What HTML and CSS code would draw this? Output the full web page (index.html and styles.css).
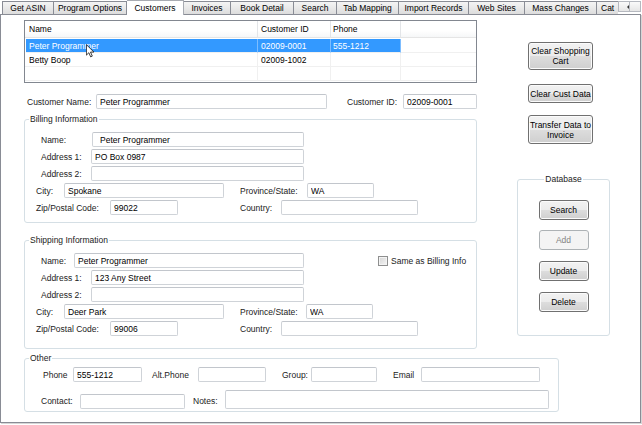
FILE: index.html
```html
<!DOCTYPE html>
<html>
<head>
<meta charset="utf-8">
<title>Customers</title>
<link rel="stylesheet" href="styles.css">
</head>
<body>
<div class="tabstrip">
  <div class="tabs">
    <div class="tab first t-asin">Get ASIN</div>
    <div class="tab t-prog">Program Options</div>
    <div class="tab active t-cust">Customers</div>
    <div class="tab t-inv">Invoices</div>
    <div class="tab t-book">Book Detail</div>
    <div class="tab t-search">Search</div>
    <div class="tab t-map">Tab Mapping</div>
    <div class="tab t-imp">Import Records</div>
    <div class="tab t-web">Web Sites</div>
    <div class="tab t-mass">Mass Changes</div>
    <div class="tab t-cat">Cat</div>
  </div>
  <div class="scroller">
    <div class="arrow"><span class="tri left"></span></div>
    <div class="arrow"><span class="tri right"></span></div>
  </div>
</div>

<div class="panel">
  <div class="top">
    <div class="left">
      <div class="list">
        <div class="lv-head">
          <div class="cell c-name">Name</div>
          <div class="cell c-id">Customer ID</div>
          <div class="cell c-phone">Phone</div>
          <div class="cell c-fill"></div>
        </div>
        <div class="lv-body">
          <div class="lv-row selected">
            <div class="cell c-name">Peter Programmer</div>
            <div class="cell c-id">02009-0001</div>
            <div class="cell c-phone">555-1212</div>
            <div class="cell c-fill"></div>
          </div>
          <div class="lv-row">
            <div class="cell c-name">Betty Boop</div>
            <div class="cell c-id">02009-1002</div>
            <div class="cell c-phone"></div>
            <div class="cell c-fill"></div>
          </div>
          <div class="lv-row">
            <div class="cell c-name"></div>
            <div class="cell c-id"></div>
            <div class="cell c-phone"></div>
            <div class="cell c-fill"></div>
          </div>
        </div>
        <svg class="cursor" viewBox="0 0 12 18" width="9" height="14">
          <path d="M0.5 0.5 L0.5 14.5 L3.8 11.3 L6.2 16.8 L8.4 15.8 L6 10.4 L10.5 10.4 Z" fill="#fff" stroke="#000" stroke-width="1" stroke-linejoin="round"/>
        </svg>
      </div>

      <div class="field-row cust-row">
        <label class="lbl ml3 w69">Customer Name:</label>
        <input class="tb w231" value="Peter Programmer" readonly>
        <label class="lbl ml20 w56">Customer ID:</label>
        <input class="tb w74" value="02009-0001" readonly>
      </div>

      <fieldset class="group billing">
        <legend>Billing Information</legend>
        <div class="field-row">
          <label class="lbl ml16 w51">Name:</label>
          <input class="tb w212 indent" value="Peter Programmer" readonly>
        </div>
        <div class="field-row">
          <label class="lbl ml16 w50">Address 1:</label>
          <input class="tb w213" value="PO Box 0987" readonly>
        </div>
        <div class="field-row">
          <label class="lbl ml16 w50">Address 2:</label>
          <input class="tb w213" value="" readonly>
        </div>
        <div class="field-row">
          <label class="lbl ml11 w28">City:</label>
          <input class="tb w160" value="Spokane" readonly>
          <label class="lbl ml16 w67">Province/State:</label>
          <input class="tb w67" value="WA" readonly>
        </div>
        <div class="field-row">
          <label class="lbl ml11 w74">Zip/Postal Code:</label>
          <input class="tb w68" value="99022" readonly>
          <label class="lbl ml62 w41">Country:</label>
          <input class="tb w137" value="" readonly>
        </div>
      </fieldset>

      <fieldset class="group shipping">
        <legend>Shipping Information</legend>
        <div class="field-row">
          <label class="lbl ml16 w33">Name:</label>
          <input class="tb w230" value="Peter Programmer" readonly>
          <span class="check ml74"></span>
          <label class="lbl ml3">Same as Billing Info</label>
        </div>
        <div class="field-row">
          <label class="lbl ml16 w50">Address 1:</label>
          <input class="tb w213" value="123 Any Street" readonly>
        </div>
        <div class="field-row">
          <label class="lbl ml16 w50">Address 2:</label>
          <input class="tb w213" value="" readonly>
        </div>
        <div class="field-row">
          <label class="lbl ml11 w28">City:</label>
          <input class="tb w160" value="Deer Park" readonly>
          <label class="lbl ml16 w66">Province/State:</label>
          <input class="tb w67" value="WA" readonly>
        </div>
        <div class="field-row">
          <label class="lbl ml11 w74">Zip/Postal Code:</label>
          <input class="tb w68" value="99006" readonly>
          <label class="lbl ml62 w41">Country:</label>
          <input class="tb w137" value="" readonly>
        </div>
      </fieldset>
    </div>

    <div class="right">
      <button class="btn btn-cart">Clear Shopping<br>Cart</button>
      <button class="btn btn-clear">Clear Cust Data</button>
      <button class="btn btn-transfer">Transfer Data to<br>Invoice</button>
      <fieldset class="group database">
        <legend>Database</legend>
        <button class="btn db-btn">Search</button>
        <button class="btn db-btn" disabled>Add</button>
        <button class="btn db-btn">Update</button>
        <button class="btn db-btn">Delete</button>
      </fieldset>
    </div>
  </div>

  <fieldset class="group other">
    <legend>Other</legend>
    <div class="field-row">
      <label class="lbl ml18 w30">Phone</label>
      <input class="tb w69" value="555-1212" readonly>
      <label class="lbl ml10 w46">Alt.Phone</label>
      <input class="tb w68" value="" readonly>
      <label class="lbl ml16 w29">Group:</label>
      <input class="tb w66" value="" readonly>
      <label class="lbl ml16 w28">Email</label>
      <input class="tb w119" value="" readonly>
    </div>
    <div class="field-row notes-row">
      <label class="lbl ml16 w39">Contact:</label>
      <input class="tb w105" value="" readonly>
      <label class="lbl ml8 w32">Notes:</label>
      <input class="tb w324 tall" value="" readonly>
    </div>
  </fieldset>
</div>
</body>
</html>
```
FILE: styles.css
```css
* { box-sizing: border-box; }
html, body { margin: 0; padding: 0; background: #fff; }
body {
  width: 642px;
  height: 425px;
  overflow: hidden;
  font-family: "Liberation Sans", Arial, sans-serif;
  font-size: 8.5px;
  color: #1b1b1b;
}

/* ---------- tab strip ---------- */
.tabstrip {
  display: flex;
  align-items: flex-start;
  height: 15px;
  position: relative;
  z-index: 1;
}
.tabs {
  flex: none;
  display: flex;
  align-items: flex-end;
  width: 618px;
  height: 15px;
  padding-left: 2px;
  overflow: hidden;
}
.tab {
  flex: none;
  height: 13px;
  margin-bottom: 1px;
  border: 1px solid #898c95;
  border-left: none;
  border-bottom: none;
  background: linear-gradient(#f4f4f4, #e9e9e9 50%, #dcdcdc);
  display: flex;
  align-items: center;
  justify-content: center;
  white-space: nowrap;
  color: #000;
  line-height: 10px;
}
.tab.first { border-left: 1px solid #898c95; }
.tab.active {
  height: 15px;
  margin-bottom: 0;
  background: #fff;
  border-color: #a8abb2;
  padding-bottom: 1px;
}
.t-asin { width: 52px; }
.t-prog { width: 73px; }
.t-cust { width: 57px; }
.t-inv { width: 47px; }
.t-book { width: 63px; }
.t-search { width: 43px; }
.t-map { width: 62px; }
.t-imp { width: 70px; }
.t-web { width: 56px; }
.t-mass { width: 72px; }
.t-cat { width: 24px; justify-content: flex-start; padding-left: 4px; border-right: none; }

.scroller { flex: none; display: flex; padding-top: 1px; }
.arrow {
  flex: none;
  width: 12px;
  height: 11px;
  border: 1px solid #b5b8bf;
  background: linear-gradient(#fafafa, #e6e6e6);
  display: flex;
  align-items: center;
  justify-content: center;
}
.arrow + .arrow { margin-left: -1px; }
.tri { width: 0; height: 0; border-top: 2px solid transparent; border-bottom: 2px solid transparent; }
.tri.left { border-right: 2px solid #333; }
.tri.right { border-left: 2px solid #333; }

/* ---------- panel ---------- */
.panel {
  margin-top: -1px;
  width: 641px;
  height: 409px;
  border: 1px solid #898c95;
  box-shadow: 1px 1px 0 #d6d6d6;
  padding-left: 23px;
  display: flex;
  flex-direction: column;
}
.top { display: flex; align-items: flex-start; }
.left { width: 453px; display: flex; flex-direction: column; }
.right {
  width: 93px;
  margin-left: 40px;
  display: flex;
  flex-direction: column;
  align-items: flex-start;
}

/* ---------- list view ---------- */
.list {
  position: relative;
  margin-top: 5px;
  height: 63px;
  border: 1px solid #828790;
  background: #fff;
  overflow: hidden;
}
.lv-head {
  display: flex;
  height: 17px;
  border-bottom: 1px solid #e5e5e5;
  background: linear-gradient(#fff, #fff 60%, #f6f7f8);
}
.lv-head .cell { border-right: 1px solid #e3e5e8; }
.lv-body { padding-top: 1px; }
.lv-row { display: flex; height: 14px; }
.lv-row .cell { border-right: 1px solid #f0f0f0; border-bottom: 1px solid #f0f0f0; }
.cell {
  flex: none;
  display: flex;
  align-items: center;
  padding-left: 3px;
  white-space: nowrap;
  color: #000;
}
.c-name { width: 233px; padding-left: 4px; }
.c-id { width: 73px; }
.c-phone { width: 70px; padding-left: 2px; }
.c-fill { flex: 1; border-right: none !important; }
.lv-row.selected .c-name,
.lv-row.selected .c-id,
.lv-row.selected .c-phone {
  background: #3399ff;
  color: #fff;
  border-right-color: #7dbdff;
}
.lv-row.selected .c-name { margin-left: 1px; width: 232px; padding-left: 3px; }
.cursor { position: absolute; left: 61px; top: 23px; }

/* ---------- form fields ---------- */
.field-row { display: flex; align-items: center; height: 15px; }
.field-row + .field-row { margin-top: 2px; }
.cust-row { margin-top: 11px; }
.lbl { flex: none; white-space: nowrap; color: #222; }
.tb {
  flex: none;
  height: 15px;
  margin: 0;
  padding: 0 0 0 3px;
  border: 1px solid #cfd3d8;
  border-top-color: #c2c6cc;
  border-radius: 2px;
  background: #fff;
  font-family: inherit;
  font-size: 8.5px;
  color: #000;
  outline: none;
}
.tb.indent { padding-left: 7px; }
.tb.tall { height: 19px; }
.notes-row { height: 19px; margin-top: 8px !important; align-items: flex-end; }
.notes-row .lbl { line-height: 15px; }

.check {
  flex: none;
  width: 10px;
  height: 10px;
  border: 1px solid #8e8f8f;
  background: linear-gradient(135deg, #d4d4d4, #f6f6f6);
  box-shadow: inset 0 0 0 1px #f4f4f4;
}

/* ---------- group boxes ---------- */
fieldset.group {
  margin: 0;
  min-width: 0;
  border: 1px solid #d5dfe5;
  border-radius: 3px;
  padding: 7px 0 7px 0;
}
fieldset.group legend {
  padding: 0 1px;
  margin-left: 4px;
  height: 12px;
  line-height: 12px;
  color: #222;
}
.billing { margin-top: 4px !important; }
.shipping { margin-top: 11px !important; padding-bottom: 12px !important; }
.other {
  width: 535px;
  margin-top: 3px !important;
  padding: 3px 0 2px 0 !important;
}
.database {
  width: 93px;
  margin-top: 29px !important;
  padding: 15px 0 23px 0 !important;
}
.database legend { margin-left: auto !important; margin-right: auto; }

/* ---------- buttons ---------- */
.btn {
  flex: none;
  margin: 0;
  padding: 0;
  border: 1px solid #707070;
  border-radius: 3px;
  background: linear-gradient(#f2f2f2, #ebebeb 50%, #dddddd 51%, #cfcfcf);
  box-shadow: inset 0 0 0 1px #fbfbfb;
  font-family: inherit;
  font-size: 8.5px;
  line-height: 10px;
  color: #000;
}
.btn-cart { margin-left: 11px; margin-top: 27px; width: 65px; height: 28px; }
.btn-clear { margin-left: 11px; margin-top: 14px; width: 65px; height: 19px; }
.btn-transfer { margin-left: 11px; margin-top: 12px; width: 65px; height: 29px; }
.db-btn { display: block; width: 50px; height: 20px; margin: 0 auto; }
.db-btn + .db-btn { margin-top: 11px; }
.db-btn:nth-of-type(2) { margin-top: 10px; }
.btn:disabled {
  border-color: #adb2b5;
  background: #f4f4f4;
  box-shadow: none;
  color: #838383;
}

/* ---------- spacing helpers ---------- */
.ml3 { margin-left: 3px; }
.ml8 { margin-left: 8px; }
.ml10 { margin-left: 10px; }
.ml11 { margin-left: 11px; }
.ml16 { margin-left: 16px; }
.ml18 { margin-left: 18px; }
.ml20 { margin-left: 20px; }
.ml62 { margin-left: 62px; }
.ml74 { margin-left: 74px; }
.w28 { width: 28px; }
.w29 { width: 29px; }
.w30 { width: 30px; }
.w32 { width: 32px; }
.w33 { width: 33px; }
.w39 { width: 39px; }
.w41 { width: 41px; }
.w46 { width: 46px; }
.w50 { width: 50px; }
.w51 { width: 51px; }
.w56 { width: 56px; }
.w66 { width: 66px; }
.w67 { width: 67px; }
.w68 { width: 68px; }
.w69 { width: 69px; }
.w74 { width: 74px; }
.w105 { width: 105px; }
.w119 { width: 119px; }
.w137 { width: 137px; }
.w160 { width: 160px; }
.w212 { width: 212px; }
.w213 { width: 213px; }
.w230 { width: 230px; }
.w231 { width: 231px; }
.w324 { width: 324px; }
```
